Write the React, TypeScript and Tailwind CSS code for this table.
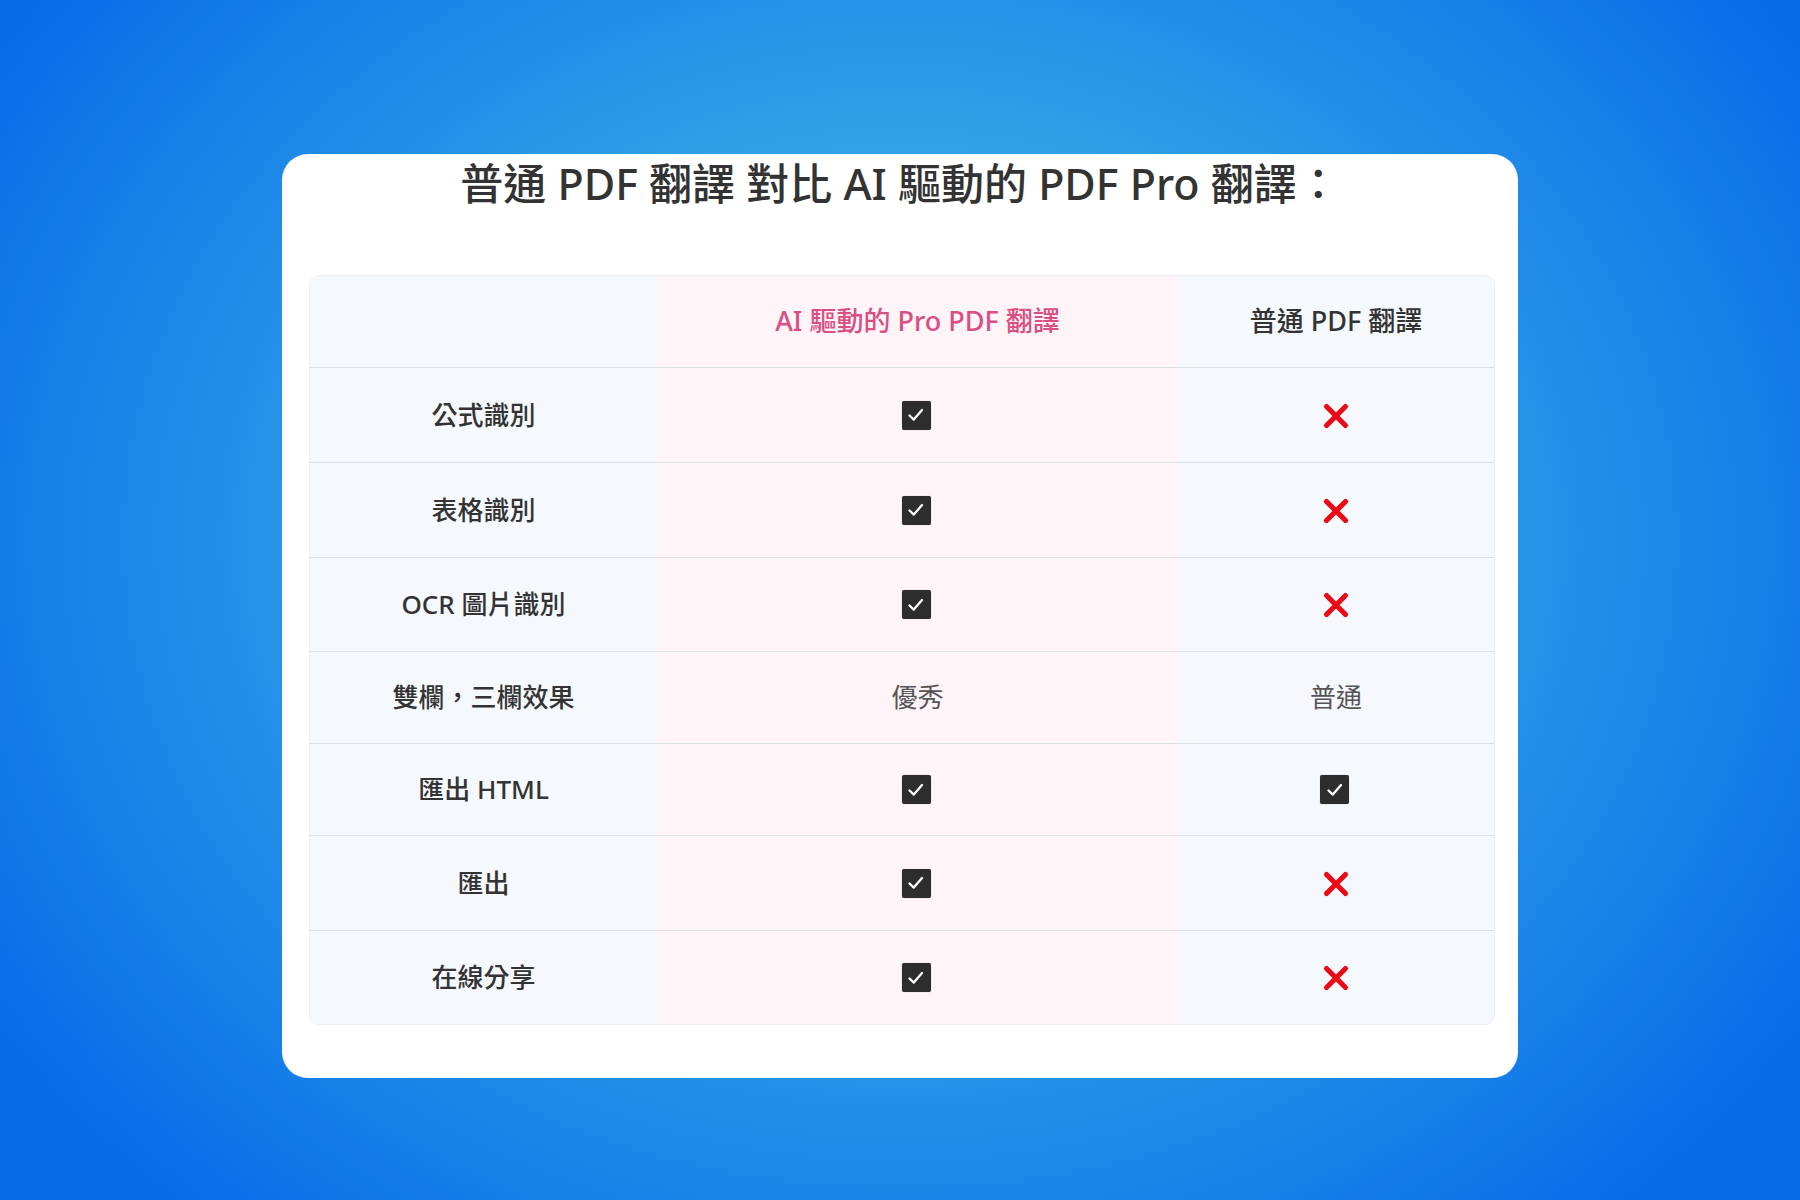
import React from "react";

const FONT = '"Noto Sans", "Noto Sans CJK TC", sans-serif';

type Cell = "check" | "cross" | string;

const rows: { label: string; pro: Cell; normal: Cell; h: string }[] = [
  { label: "公式識別", pro: "check", normal: "cross", h: "h-[95px]" },
  { label: "表格識別", pro: "check", normal: "cross", h: "h-[95px]" },
  { label: "OCR 圖片識別", pro: "check", normal: "cross", h: "h-[94px]" },
  { label: "雙欄，三欄效果", pro: "優秀", normal: "普通", h: "h-[92px]" },
  { label: "匯出 HTML", pro: "check", normal: "check", h: "h-[92px]" },
  { label: "匯出", pro: "check", normal: "cross", h: "h-[95px]" },
  { label: "在線分享", pro: "check", normal: "cross", h: "h-[93px]" },
];

function Check() {
  return (
    <div className="w-[29px] h-[29px] bg-[#2d2d2d] rounded-[2px] flex items-center justify-center shadow-[0_0_1px_rgba(0,0,0,0.4)] mr-[3px]">
      <svg width="22" height="22" viewBox="0 0 22 22">
        <path d="M4.5 11.5 L8.8 15.6 L17 6" fill="none" stroke="#ffffff" strokeWidth="2.3" strokeLinecap="round" strokeLinejoin="round" />
      </svg>
    </div>
  );
}

function Cross() {
  return (
    <svg width="28" height="28" viewBox="0 0 28 28" className="mt-[1px]">
      <path d="M4.5 4.5 L23.5 23.5 M23.5 4.5 L4.5 23.5" fill="none" stroke="#ea0a16" strokeWidth="5.2" strokeLinecap="round" />
    </svg>
  );
}

function Value({ v }: { v: Cell }) {
  if (v === "check") return <Check />;
  if (v === "cross") return <Cross />;
  return <span className="text-[26px] text-[#555555] font-normal">{v}</span>;
}

export default function App() {
  return (
    <div
      className="w-full h-[1200px] overflow-hidden bg-[radial-gradient(ellipse_60%_75%_at_50%_45%,#3cb2ea_0%,#2fa1e7_45%,#1a84e8_75%,#086be8_100%)] pt-[154px]"
      style={{ fontFamily: FONT }}
    >
      <div className="mx-auto w-[1236px] h-[924px] bg-white rounded-[26px] pt-[4px]">
        <h1 className="text-center text-[43px] leading-[52px] font-medium text-[#333333] tracking-[0px]">
          普通 PDF 翻譯 對比 AI 驅動的 PDF Pro 翻譯：
        </h1>
        <div className="ml-[27px] mt-[65px] w-[1186px] rounded-[10px] border border-[#eceef2] overflow-hidden">
          <div className="grid grid-cols-[347px_521px_316px] h-[92px] border-b border-[#dcdfe4]">
            <div className="bg-[#f5f8fc]" />
            <div className="bg-[#fff4f7] flex items-center justify-center text-[27px] font-medium text-[#d94f83]">
              AI 驅動的 Pro PDF 翻譯
            </div>
            <div className="bg-[#f5f8fc] flex items-center justify-center text-[27px] font-medium text-[#333333]">
              普通 PDF 翻譯
            </div>
          </div>
          {rows.map((r, i) => (
            <div
              key={i}
              className={`grid grid-cols-[347px_521px_316px] ${r.h} ${i < rows.length - 1 ? "border-b border-[#dcdfe4]" : ""}`}
            >
              <div className="bg-[#f5f8fc] flex items-center justify-center text-[26px] font-medium text-[#333333]">
                {r.label}
              </div>
              <div className="bg-[#fff4f7] flex items-center justify-center">
                <Value v={r.pro} />
              </div>
              <div className="bg-[#f5f8fc] flex items-center justify-center">
                <Value v={r.normal} />
              </div>
            </div>
          ))}
        </div>
      </div>
    </div>
  );
}
